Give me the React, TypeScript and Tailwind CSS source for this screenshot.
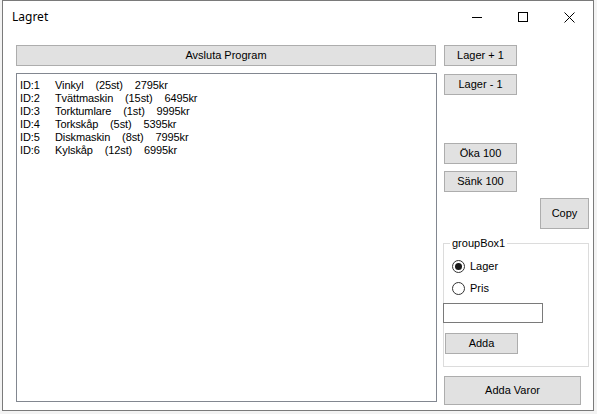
import React from 'react';

const items = [
  { id: 1, name: 'Vinkyl', qty: '(25st)', price: '2795kr' },
  { id: 2, name: 'Tvättmaskin', qty: '(15st)', price: '6495kr' },
  { id: 3, name: 'Torktumlare', qty: '(1st)', price: '9995kr' },
  { id: 4, name: 'Torkskåp', qty: '(5st)', price: '5395kr' },
  { id: 5, name: 'Diskmaskin', qty: '(8st)', price: '7995kr' },
  { id: 6, name: 'Kylskåp', qty: '(12st)', price: '6995kr' },
];

function WinButton({ label, className }: { label: string; className: string }) {
  return (
    <button className={`flex items-center justify-center bg-[#e1e1e1] border border-[#adadad] text-[11px] text-black leading-none ${className}`}>
      {label}
    </button>
  );
}

export default function App() {
  return (
    <div className="w-[597px] h-[414px] bg-[#f3f3f3] overflow-hidden font-['Liberation_Sans',Arial,sans-serif]">
      <div className="ml-[2px] w-[592px] h-[411px] bg-white border border-[#7a7a7a] flex flex-col">
        {/* Title bar */}
        <div className="h-[29px] flex items-center shrink-0">
          <span className="ml-[9px] mt-[3px] text-[12px] text-black font-['Noto_Sans',sans-serif]">Lagret</span>
          <div className="ml-auto flex items-center mt-[3px]">
            <div className="w-[46px] flex justify-center">
              <div className="w-[10px] h-px bg-black" />
            </div>
            <div className="w-[46px] flex justify-center">
              <div className="w-[10px] h-[10px] border border-black" />
            </div>
            <div className="w-[46px] flex justify-center mr-[1px]">
              <svg width="11" height="11" viewBox="0 0 11 11">
                <path d="M0.5 0.5 L10.5 10.5 M10.5 0.5 L0.5 10.5" stroke="black" strokeWidth="1" />
              </svg>
            </div>
          </div>
        </div>

        {/* Client area */}
        <div className="flex pt-[15px]">
          {/* Left column */}
          <div className="ml-[13px] w-[421px] flex flex-col">
            <WinButton label="Avsluta Program" className="h-[21px] w-[420px]" />
            <div className="mt-[7px] h-[329px] w-[421px] border border-[#828790] pt-[5px] pl-[3px] text-[11px] text-black leading-[13px] tracking-[-0.1px]">
              {items.map((it) => (
                <div key={it.id} className="flex whitespace-pre">
                  <span className="w-[35px]">ID:{it.id}</span>
                  <span>{it.name}{'    '}{it.qty}{'    '}{it.price}</span>
                </div>
              ))}
            </div>
          </div>

          {/* Right column */}
          <div className="ml-[6px] w-[146px] flex flex-col">
            <WinButton label="Lager + 1" className="ml-[1px] w-[73px] h-[21px]" />
            <WinButton label="Lager - 1" className="ml-[1px] mt-[8px] w-[73px] h-[21px]" />
            <WinButton label="Öka 100" className="ml-[1px] mt-[48px] w-[73px] h-[21px]" />
            <WinButton label="Sänk 100" className="ml-[1px] mt-[7px] w-[73px] h-[21px]" />
            <WinButton label="Copy" className="self-end mt-[6px] w-[49px] h-[31px]" />

            {/* groupBox1 */}
            <div className="relative mt-[14px] h-[124px] w-[146px] border border-[#dcdcdc]">
              <span className="absolute -top-[7px] left-[6px] bg-white px-[2px] text-[11px] leading-[13px] text-black">groupBox1</span>
              <div className="flex flex-col pt-[15px]">
                <div className="flex items-center h-[14px] ml-[8px]">
                  <div className="w-[13px] h-[13px] rounded-full border border-[#333] flex items-center justify-center">
                    <div className="w-[7px] h-[7px] rounded-full bg-[#1a1a1a]" />
                  </div>
                  <span className="ml-[5px] text-[11px] text-black">Lager</span>
                </div>
                <div className="flex items-center h-[14px] ml-[8px] mt-[8px]">
                  <div className="w-[13px] h-[13px] rounded-full border border-[#333]" />
                  <span className="ml-[5px] text-[11px] text-black">Pris</span>
                </div>
                <div className="-ml-px mt-[8px] w-[100px] h-[20px] border border-[#7a7a7a] bg-white" />
                <WinButton label="Adda" className="ml-[1px] mt-[10px] w-[73px] h-[21px]" />
              </div>
            </div>

            <WinButton label="Adda Varor" className="ml-[1px] mt-[9px] w-[137px] h-[29px]" />
          </div>
        </div>
      </div>
    </div>
  );
}
